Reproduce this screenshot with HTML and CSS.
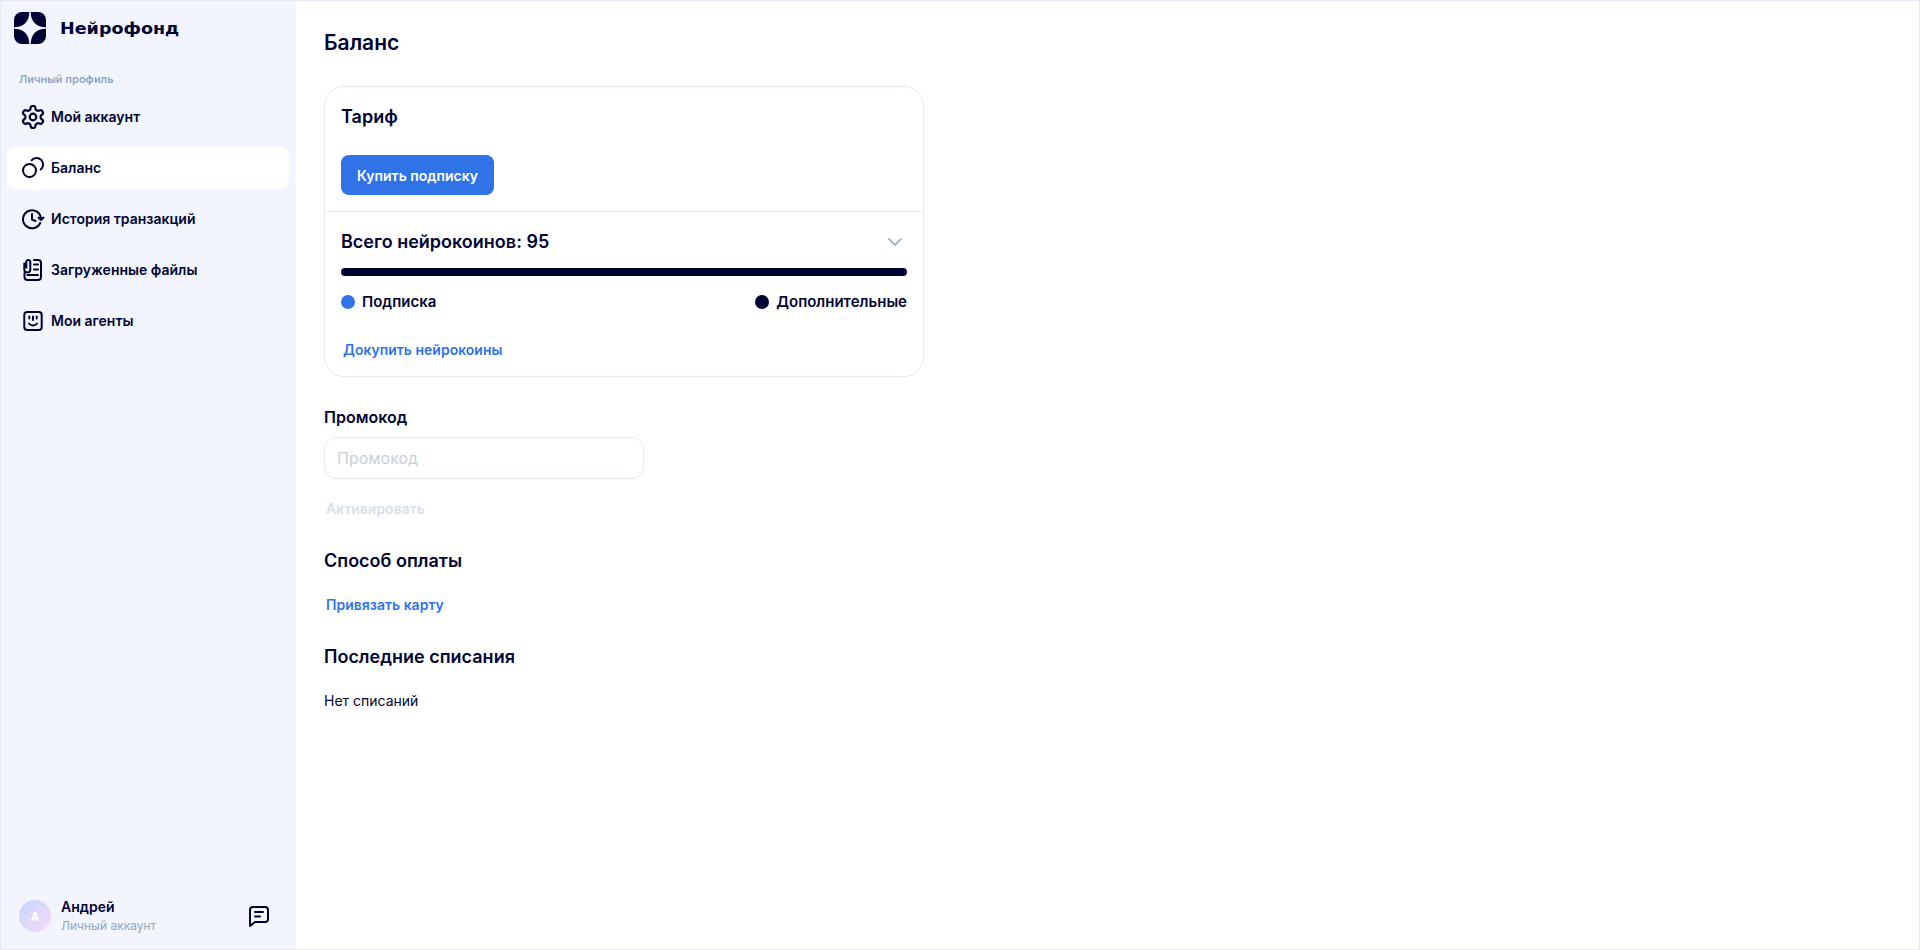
FILE: index.html
```html
<!DOCTYPE html>
<html lang="ru">
<head>
<meta charset="utf-8">
<title>Баланс</title>
<link rel="stylesheet" href="styles.css">
</head>
<body>
<div class="app">
  <aside class="sidebar">
    <div class="brand">
      <svg class="logo" viewBox="0 0 32 32"><path fill="#000433" d="M8 0h7.300c0 9.500-5.800 15.300-15.300 15.300V8a8 8 0 0 1 8-8Z"/><path fill="#000433" d="M24 0h-7.300c0 9.500 5.800 15.300 15.300 15.300V8a8 8 0 0 0-8-8Z"/><path fill="#000433" d="M8 32h7.300c0-9.500-5.800-15.300-15.300-15.300V24a8 8 0 0 0 8 8Z"/><path fill="#000433" d="M24 32h-7.300c0-9.500 5.800-15.300 15.300-15.300V24a8 8 0 0 1-8 8Z"/></svg>
      <span class="wordmark">Нейрофонд</span>
    </div>
    <div class="section-label">Личный профиль</div>
    <nav class="nav">
      <a class="nav-item">
        <svg class="icon" viewBox="1.100 1.100 21.800 21.800"><path d="M12.220 2h-.44a2 2 0 0 0-2 2v.180a2 2 0 0 1-1 1.730l-.43.250a2 2 0 0 1-2 0l-.15-.08a2 2 0 0 0-2.730.730l-.22.380a2 2 0 0 0 .73 2.730l.15.100a2 2 0 0 1 1 1.720v.510a2 2 0 0 1-1 1.740l-.15.090a2 2 0 0 0-.73 2.730l.22.380a2 2 0 0 0 2.730.730l.15-.08a2 2 0 0 1 2 0l.43.250a2 2 0 0 1 1 1.730V20a2 2 0 0 0 2 2h.44a2 2 0 0 0 2-2v-.180a2 2 0 0 1 1-1.730l.43-.250a2 2 0 0 1 2 0l.15.080a2 2 0 0 0 2.730-.730l.22-.390a2 2 0 0 0-.73-2.730l-.15-.080a2 2 0 0 1-1-1.740v-.500a2 2 0 0 1 1-1.740l.15-.090a2 2 0 0 0 .73-2.730l-.22-.380a2 2 0 0 0-2.730-.730l-.15.080a2 2 0 0 1-2 0l-.43-.250a2 2 0 0 1-1-1.730V4a2 2 0 0 0-2-2Z"/><circle cx="12" cy="12" r="3"/></svg>
        <span class="nav-text">Мой аккаунт</span>
      </a>
      <a class="nav-item active">
        <svg class="icon" viewBox="0 0 24 24"><circle cx="8.500" cy="14.500" r="6.500"/><path d="M10.600 4.300A6.500 6.500 0 1 1 19.700 13.500"/></svg>
        <span class="nav-text">Баланс</span>
      </a>
      <a class="nav-item">
        <svg class="icon" viewBox="0 0 24 24"><path d="M19.200 16A9 9 0 1 1 20 12"/><path d="M17.500 10.500 20 13l2.500-2.500"/><path d="M11 7v5.500l3.500 1.500"/></svg>
        <span class="nav-text">История транзакций</span>
      </a>
      <a class="nav-item">
        <svg class="icon" viewBox="0 0 24 24"><path d="M3.500 15v4a3 3 0 0 0 3 3H17a3 3 0 0 0 3-3V5a3 3 0 0 0-3-3h-4"/><path d="M3.300 5.500v6a3 3 0 0 0 6 0V4a2 2 0 0 0-4 0v5.500"/><path d="M13 6.500h4M13 11.500h4M6.500 17H17"/></svg>
        <span class="nav-text">Загруженные файлы</span>
      </a>
      <a class="nav-item">
        <svg class="icon" viewBox="0 0 24 24"><rect x="3.300" y="3" width="17.400" height="18" rx="3"/><path d="M8.300 7.500v2M15.700 7.500v2M12 7.500v3.500M8 14.500c2 2.500 6 2.500 8 0"/></svg>
        <span class="nav-text">Мои агенты</span>
      </a>
    </nav>
    <div class="user">
      <div class="avatar">А</div>
      <div class="user-text">
        <div class="user-name">Андрей</div>
        <div class="user-sub">Личный аккаунт</div>
      </div>
      <svg class="icon chat" viewBox="0 0 24 24"><path d="M3 6a3 3 0 0 1 3-3h12a3 3 0 0 1 3 3v9a3 3 0 0 1-3 3H8l-5 4V6Z"/><path d="M8 8h8M8 12.500h5"/></svg>
    </div>
  </aside>
  <main class="main">
    <h1 class="page-title">Баланс</h1>
    <section class="card">
      <div class="card-top">
        <h2 class="card-title">Тариф</h2>
        <button class="btn-primary">Купить подписку</button>
      </div>
      <div class="card-body">
        <div class="total-row">
          <span class="total">Всего нейрокоинов: 95</span>
          <svg class="chevron" viewBox="0 0 16 10"><path d="M1.500 1.500 8 8l6.500-6.500"/></svg>
        </div>
        <div class="bar"></div>
        <div class="legend">
          <span class="legend-item"><i class="dot dot-blue"></i>Подписка</span>
          <span class="legend-item"><i class="dot dot-dark"></i>Дополнительные</span>
        </div>
        <a class="link link-card">Докупить нейрокоины</a>
      </div>
    </section>
    <label class="field-label">Промокод</label>
    <input class="input" placeholder="Промокод">
    <a class="link link-disabled">Активировать</a>
    <h3 class="section-title">Способ оплаты</h3>
    <a class="link link-plain">Привязать карту</a>
    <h3 class="section-title">Последние списания</h3>
    <p class="empty">Нет списаний</p>
  </main>
</div>
</body>
</html>
```
FILE: styles.css
```css
* { box-sizing: border-box; }
html, body { margin: 0; height: 100%; overflow: hidden; }
body { font-family: Inter, "Noto Sans", sans-serif; color: #000433; background: #fff; }
.app { display: flex; height: 950px; border: 1px solid #e8eaf3; }
.sidebar { width: 295px; flex: none; background: #f2f5fd; display: flex; flex-direction: column; padding: 11px 7px 0 6px; }
.brand { display: flex; align-items: center; gap: 14px; padding-left: 7px; height: 32px; }
.logo { width: 32px; height: 32px; display: block; }
.wordmark { font-family: "DejaVu Sans", sans-serif; font-weight: 700; font-size: 15px; line-height: 20px; padding-top: 2px; transform: scaleX(1.17); transform-origin: left center; }
.section-label { margin: 28px 0 0 12px; font-size: 11px; line-height: 14px; font-weight: 600; color: #93a5c4; }
.nav { display: flex; flex-direction: column; gap: 7px; margin-top: 9px; }
.nav-item { display: flex; align-items: center; gap: 6px; height: 44px; padding-left: 14px; border-radius: 12px; font-size: 14px; font-weight: 600; }
.nav-item.active { background: #fff; }
.nav-text { line-height: 20px; }
.icon { width: 24px; height: 24px; flex: none; fill: none; stroke: #000433; stroke-width: 2; stroke-linecap: round; stroke-linejoin: round; }
.user { margin-top: auto; display: flex; align-items: center; padding: 0 18px 15px 12px; }
.avatar { width: 32px; height: 32px; border-radius: 50%; background: linear-gradient(135deg, #c4d8ff, #f6d9f8); color: #fff; font-size: 12px; font-weight: 700; display: flex; align-items: center; justify-content: center; }
.user-text { margin-left: 10px; flex: 1; }
.user-name { font-size: 14px; line-height: 18px; font-weight: 600; }
.user-sub { margin-top: 2px; font-size: 12px; line-height: 16px; color: #93a5c4; }
.chat { display: block; }
.main { flex: 1; padding: 28px 28px 0; }
.page-title { margin: 0; font-size: 21px; line-height: 28px; font-weight: 600; }
.card { width: 600px; margin-top: 29px; border: 1px solid #e8eaf3; border-radius: 20px; }
.card-top { padding: 16px 16px 16px; border-bottom: 1px solid #e8eaf3; }
.card-title { margin: 0; font-size: 18px; line-height: 28px; font-weight: 600; }
.btn-primary { display: block; margin-top: 24px; width: 153px; height: 40px; border: 0; border-radius: 8px; background: #2f73e6; color: #fff; font: 600 14px Inter, sans-serif; }
.card-body { padding: 16px 16px 16px; }
.total-row { display: flex; align-items: center; justify-content: space-between; height: 28px; }
.total { font-size: 18px; line-height: 28px; font-weight: 600; }
.chevron { width: 16px; height: 10px; margin-right: 4px; fill: none; stroke: #a9b6cf; stroke-width: 2; }
.bar { height: 8px; margin-top: 12px; border-radius: 4px; background: #000433; }
.legend { display: flex; justify-content: space-between; margin-top: 14px; }
.legend-item { display: flex; align-items: center; gap: 7px; font-size: 15px; line-height: 24px; font-weight: 600; }
.dot { width: 14px; height: 14px; border-radius: 50%; }
.dot-blue { background: #2f73e6; }
.dot-dark { background: #000433; }
.link { display: block; font-size: 14px; line-height: 20px; font-weight: 600; color: #2f73e6; }
.link-card { margin: 26px 0 0 2px; }
.field-label { display: block; margin-top: 30px; font-size: 16px; line-height: 20px; font-weight: 600; }
.input { display: block; width: 320px; height: 42px; margin-top: 10px; padding: 0 12px; border: 1px solid #e8eaf3; border-radius: 12px; font: 400 16px Inter, sans-serif; outline: 0; }
.input::placeholder { color: #c8cfe0; }
.link-disabled { margin: 20px 0 0 2px; color: #d9deea; }
.section-title { margin: 30px 0 0; font-size: 18px; line-height: 24px; font-weight: 600; }
.link-plain { margin: 22px 0 0 2px; }
.empty { margin: 22px 0 0; font-size: 14px; line-height: 20px; }
```
